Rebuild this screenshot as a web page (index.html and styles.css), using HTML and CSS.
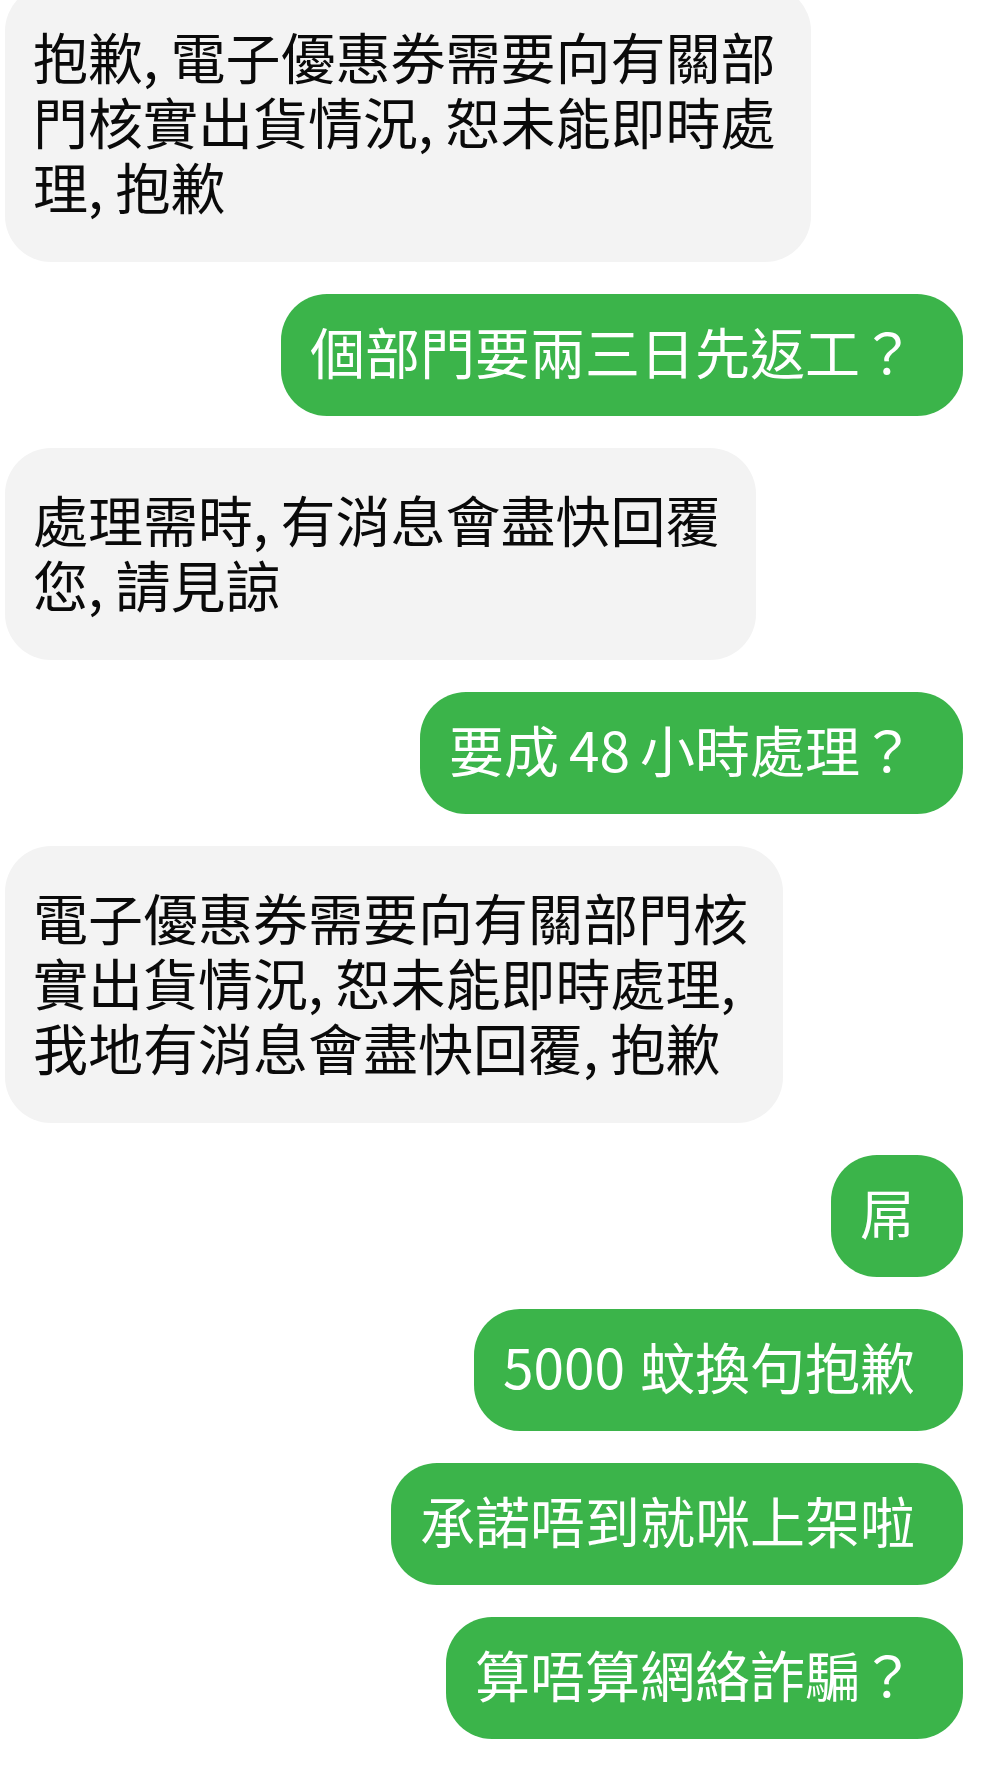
FILE: index.html
```html
<!DOCTYPE html>
<html lang="zh-Hant">
<head>
<meta charset="UTF-8" />
<meta name="viewport" content="width=device-width, initial-scale=1" />
<title>對話</title>
<link rel="stylesheet" href="styles.css">
</head>
<body>

<div class="chat">
  <div class="msg in">抱歉, 電子優惠券需要向有關部<br>門核實出貨情況, 恕未能即時處<br>理, 抱歉</div>
  <div class="msg out">個部門要兩三日先返工？</div>
  <div class="msg in">處理需時, 有消息會盡快回覆<br>您, 請見諒</div>
  <div class="msg out">要成<span class="num pre">48</span>小時處理？</div>
  <div class="msg in">電子優惠券需要向有關部門核<br>實出貨情況, 恕未能即時處理,<br>我地有消息會盡快回覆, 抱歉</div>
  <div class="msg out">屌</div>
  <div class="msg out"><span class="num">5000</span>蚊換句抱歉</div>
  <div class="msg out">承諾唔到就咪上架啦</div>
  <div class="msg out">算唔算網絡詐騙？</div>
</div>

</body>
</html>
```

FILE: styles.css
```css
body {
  margin: 0;
  background: #fff;
  font-family: "Noto Sans CJK TC", "Noto Sans", sans-serif;
}
.chat {
  display: flex;
  flex-direction: column;
  gap: 32px;
  margin-top: -15px;
  padding: 0 31px 40px 5px;
}
.msg {
  font-size: 55px;
  line-height: 62px;
  white-space: nowrap;
  border-radius: 46px;
}
.msg.in {
  align-self: flex-start;
  background: #f3f3f3;
  color: #0a0a0a;
  line-height: 65px;
  padding: 38px 35px 44px 28px;
}
.msg.out {
  align-self: flex-end;
  background: #3bb44a;
  color: #fff;
  padding: 25px 48px 35px 29px;
}
.num {
  margin-right: 15px;
}
.num.pre {
  margin-left: 10px;
  margin-right: 10px;
}
```
